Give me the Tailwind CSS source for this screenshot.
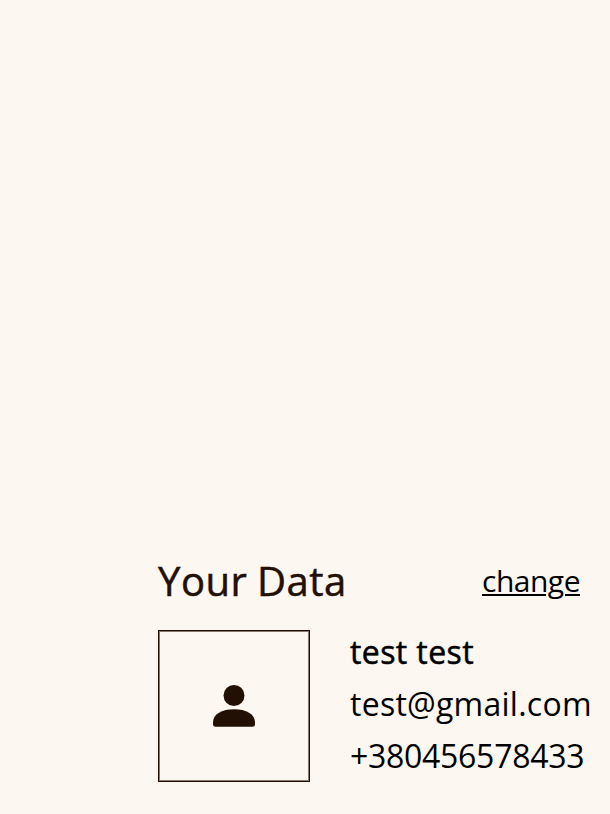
<!DOCTYPE html>
<html lang="en"><head><meta charset="utf-8"><title>Your Data</title>
<script src="https://cdn.jsdelivr.net/npm/@tailwindcss/browser@4"></script></head>
<body class="h-[814px] overflow-hidden bg-[#fcf7f1] font-['Open_Sans',sans-serif] text-black">
<main class="pl-[158px] pt-[551px]">
<header class="flex h-[60px] w-[422px] items-center justify-between">
<h1 class="text-[40px] leading-[60px] tracking-[0.55px] [word-spacing:-1.5px] text-[#211003] [-webkit-text-stroke:0.5px_#211003]">Your Data</h1>
<a href="#" class="text-[30px] leading-[60px] tracking-[-0.5px] underline decoration-2 underline-offset-[2px]">change</a>
</header>
<section class="mt-[19px] flex gap-10">
<div class="flex size-[152px] shrink-0 items-center justify-center border border-[#211003] shadow-[inset_0_0_0_1px_#82766d]">
<svg class="size-16" viewBox="0 0 64 64" fill="#211003"><circle cx="32" cy="21.5" r="10.5"/><path d="M11 48.500C11 40 20 35.300 32 35.300S53 40 53 48.500V50Q53 52.700 50.500 52.700H13.500Q11 52.700 11 50Z"/></svg>
</div>
<div class="whitespace-nowrap text-[32px] leading-[52px]">
<p class="-mt-1 tracking-[0.4px] [-webkit-text-stroke:0.5px_#000]">test test</p><p class="tracking-[0.25px]">test@gmail.com</p><p class="tracking-[-0.28px]">+380456578433</p>
</div>
</section>
</main>
</body></html>
